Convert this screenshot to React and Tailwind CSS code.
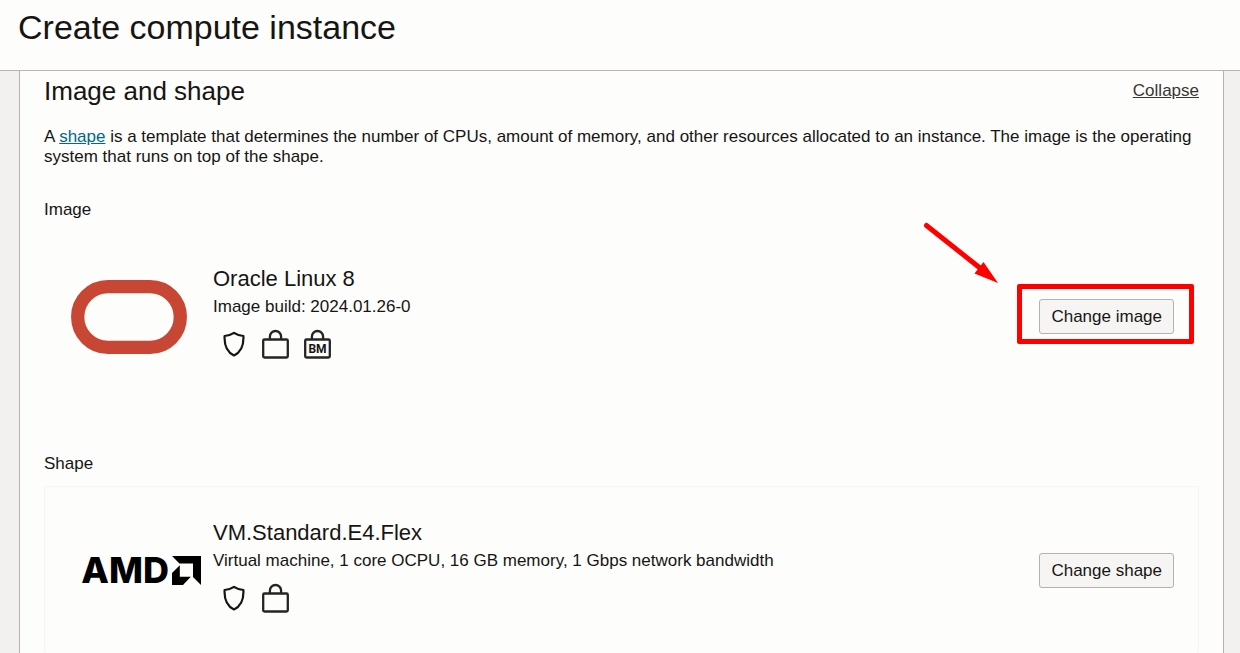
function ShieldIcon() {
  return (
    <svg width="24" height="26" viewBox="0 0 24 26" fill="none" stroke="#161513" strokeWidth="2.2" strokeLinejoin="round" role="img" aria-label="Shielded instance">
      <path d="M11 1.8C8.4 3.5 5.1 4.6 1.6 5C1.2 12.8 3.2 20.8 11 24.4C18.8 20.8 20.8 12.8 20.4 5C16.9 4.6 13.6 3.5 11 1.8Z" />
    </svg>
  );
}

function LockIcon({ label, children }) {
  return (
    <svg width="28" height="30" viewBox="0 0 28 30" fill="none" stroke="#262422" strokeWidth="2.3" role="img" aria-label={label}>
      <rect x="2.2" y="10.5" width="24.6" height="18" rx="1.3" />
      <path d="M8.9 10.5V7.6A5.6 5.6 0 0 1 20.1 7.6V10.5" />
      {children}
    </svg>
  );
}

function OracleLogo() {
  return (
    <svg width="117" height="76" viewBox="0 0 117 76" role="img" aria-label="Oracle">
      <rect x="6.7" y="8.7" width="102.6" height="60.6" rx="30.3" fill="none" stroke="#c74634" strokeWidth="13.3" />
    </svg>
  );
}

function AmdLogo() {
  return (
    <div className="flex items-center gap-[3px] text-black">
      <span className="font-['Inter',sans-serif] text-[36px] leading-[30px] font-extrabold">AMD</span>
      <svg width="29" height="29" viewBox="0 0 29 29" fill="currentColor" aria-hidden="true">
        <path d="M0 0H29V29L21 21V7.5H7.5Z" />
        <path d="M7.8 9.2V20.8H18.8L11 29H0V17Z" />
      </svg>
    </div>
  );
}

function ActionButton({ children }) {
  return (
    <button type="button" className="h-[35px] rounded-[3px] border border-[#b5b1ae] bg-[#f6f5f4] px-[11px] pt-px whitespace-nowrap">
      {children}
    </button>
  );
}

function Callout() {
  return (
    <>
      <div className="pointer-events-none absolute -top-[15px] -right-5 -bottom-[10px] -left-[22px] rounded-[2px] border-5 border-[#ff0000]" />
      <svg className="pointer-events-none absolute -top-20 -left-[117px]" width="78" height="66" viewBox="0 0 78 66" aria-hidden="true">
        <path d="M4.5 6.5L58 49" stroke="#ff0000" strokeWidth="5" strokeLinecap="round" />
        <path d="M76 64L52.5 54.5L61.5 43Z" fill="#ff0000" />
      </svg>
    </>
  );
}

function OptionCard({ logo, title, detail, icons, action, framed }) {
  return (
    <div className={`flex min-h-[168px] items-center rounded-[3px] border pr-6 ${framed ? "border-[#f5f4f2]" : "border-transparent"}`}>
      <div className="flex w-[168px] shrink-0">{logo}</div>
      <div className="min-w-0 flex-1 pb-2">
        <h3 className="text-[22px] leading-8">{title}</h3>
        <p className="leading-6">{detail}</p>
        <div className="mt-2 flex h-[34px] items-center gap-[14px] pl-[10px]">{icons}</div>
      </div>
      <div className="relative">{action}</div>
    </div>
  );
}

export default function App() {
  return (
    <div className="flex min-h-screen flex-col bg-[#f2f1ef] font-['Liberation_Sans',Arial,sans-serif] text-[17px] leading-5 text-[#161513]">
      <header className="border-b border-[#bab6ae] bg-[#fdfdfc] px-[18px] pt-[7px] pb-[23px]">
        <h1 className="text-[34px] leading-10">Create compute instance</h1>
      </header>
      <main className="mr-4 ml-[19px] flex-1 border-x border-[#b5b1ae] bg-[#fdfdfc] px-6">
        <div className="flex items-center justify-between pt-1">
          <h2 className="text-[26px] leading-8">Image and shape</h2>
          <a href="#collapse" className="text-[#3a3631] underline">Collapse</a>
        </div>
        <p className="mt-5">
          A <a href="#shape" className="text-[#00688c] underline">shape</a> is a template that determines the number of CPUs, amount of memory, and other resources allocated to an instance. The image is the operating system that runs on top of the shape.
        </p>
        <section className="mt-[33px]">
          <h3 className="mb-3">Image</h3>
          <OptionCard
            logo={<div className="pl-[26px]"><OracleLogo /></div>}
            title="Oracle Linux 8"
            detail="Image build: 2024.01.26-0"
            icons={
              <>
                <ShieldIcon />
                <LockIcon label="Security feature" />
                <LockIcon label="Bare metal">
                  <text x="14.5" y="24" textAnchor="middle" fill="#161513" stroke="none" fontFamily="Roboto, sans-serif" fontWeight="700" fontSize="12">BM</text>
                </LockIcon>
              </>
            }
            action={<><ActionButton>Change image</ActionButton><Callout /></>}
          />
        </section>
        <section className="mt-[54px]">
          <h3 className="mb-3">Shape</h3>
          <OptionCard
            framed
            logo={<div className="ml-auto pr-3"><AmdLogo /></div>}
            title="VM.Standard.E4.Flex"
            detail="Virtual machine, 1 core OCPU, 16 GB memory, 1 Gbps network bandwidth"
            icons={
              <>
                <ShieldIcon />
                <LockIcon label="Security feature" />
              </>
            }
            action={<ActionButton>Change shape</ActionButton>}
          />
        </section>
      </main>
    </div>
  );
}
